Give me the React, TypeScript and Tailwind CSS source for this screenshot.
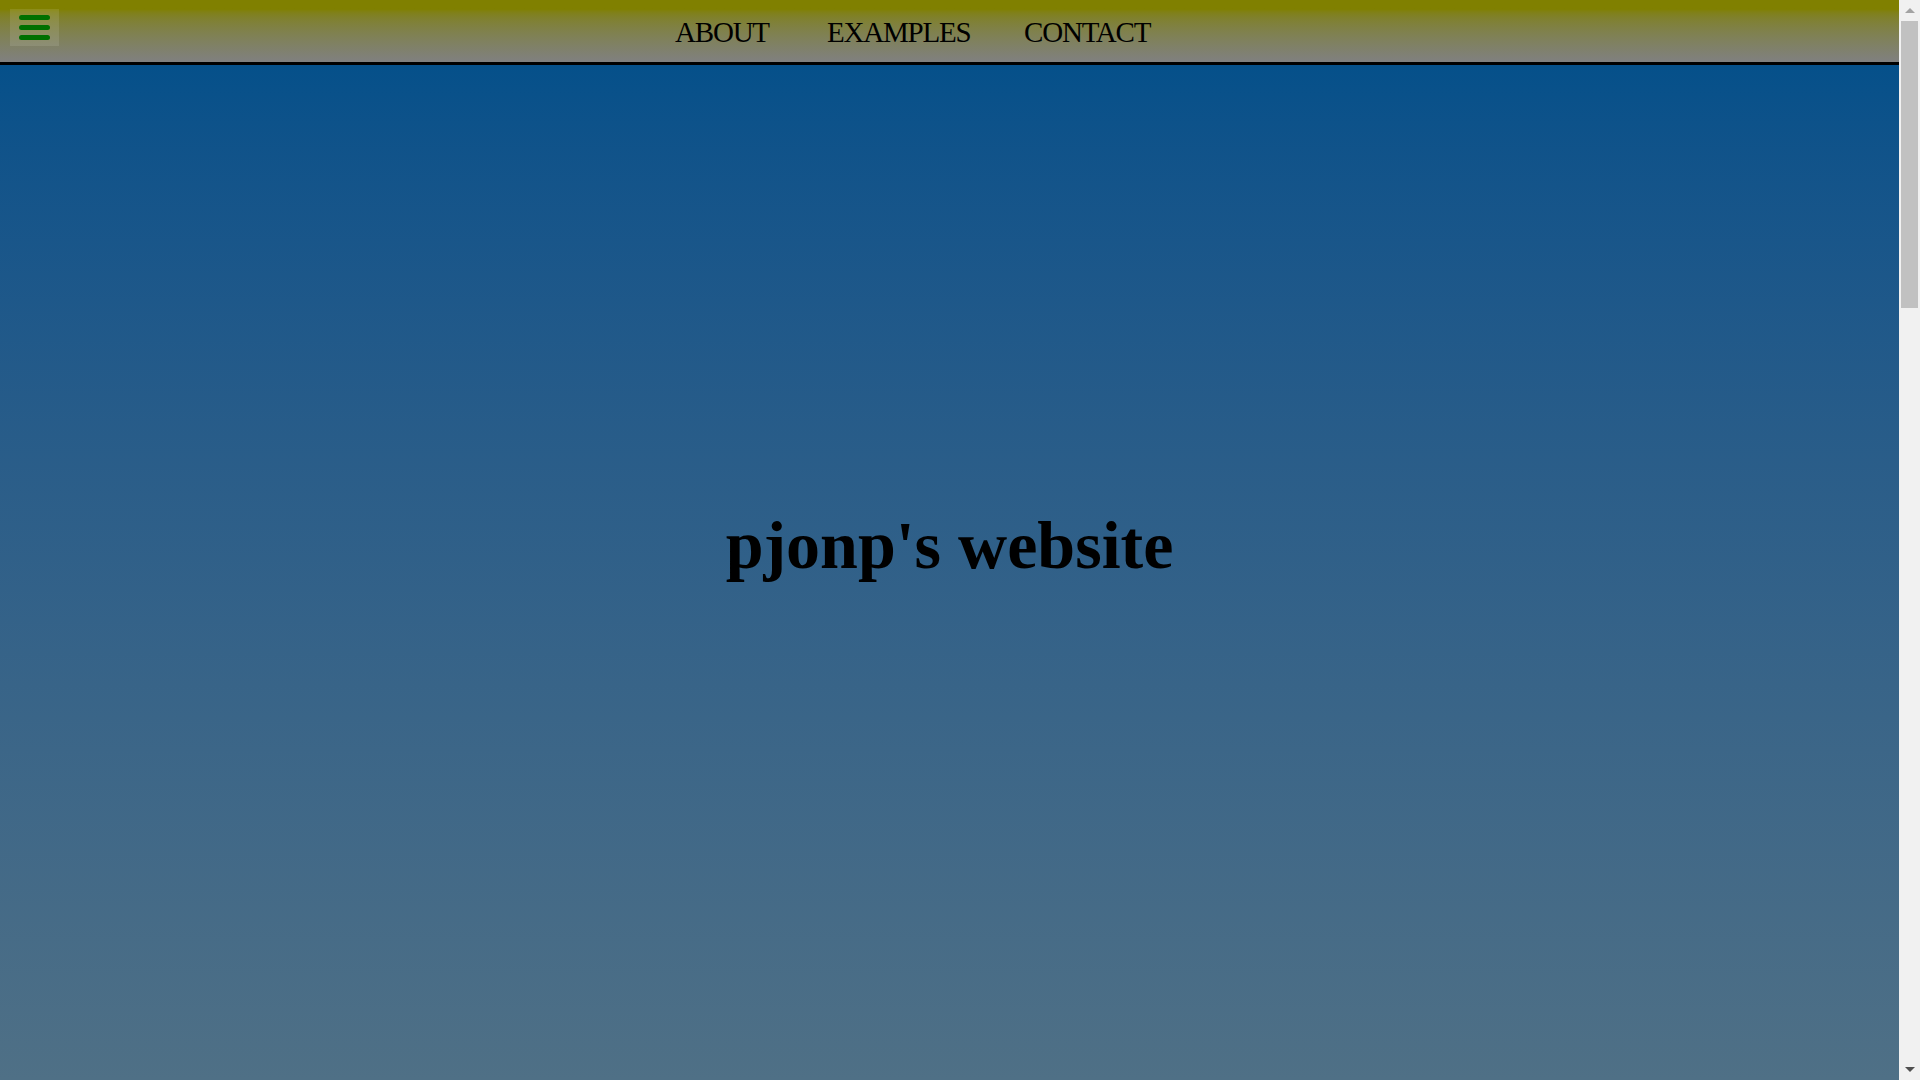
const NAV = [
  { label: "ABOUT", w: "w-[152px]" },
  { label: "EXAMPLES", w: "w-[197px]" },
  { label: "CONTACT", w: "w-[160px]" },
];

function Scrollbar() {
  return (
    <aside className="fixed right-0 top-0 h-screen w-[21px] bg-[#f1f1f1] flex flex-col">
      <div className="h-[21px] flex items-center justify-center">
        <span className="w-0 h-0 border-x-[5px] border-x-transparent border-b-[5px] border-b-[#a3a3a3]" />
      </div>
      <div className="mx-[2px] h-[287px] bg-[#c1c1c1]" />
      <div className="flex-1" />
      <div className="h-[21px] flex items-center justify-center">
        <span className="w-0 h-0 border-x-[5px] border-x-transparent border-t-[5px] border-t-[#505050]" />
      </div>
    </aside>
  );
}

export default function App() {
  return (
    <div className="font-['Liberation_Serif',serif]">
      <div className="w-[1899px]">
        {/* Top bar */}
        <header className="flex items-start h-[65px] border-b-[3px] border-black bg-gradient-to-b from-[#808000] from-15% to-[#808080]">
          <button
            aria-label="menu"
            className="ml-[10px] mt-[9px] w-[49px] h-[37px] flex flex-col items-center justify-center gap-[5px] bg-white/10"
          >
            <span className="block w-[31px] h-[5px] rounded-full bg-[#007000]" />
            <span className="block w-[31px] h-[5px] rounded-full bg-[#007000]" />
            <span className="block w-[31px] h-[5px] rounded-full bg-[#007000]" />
          </button>
          <nav className="ml-[616px] flex pt-[18px]">
            {NAV.map((item) => (
              <a
                key={item.label}
                href="#"
                className={`${item.w} text-[29px] leading-[29px] tracking-[-1.2px] text-black`}
              >
                {item.label}
              </a>
            ))}
          </nav>
        </header>

        {/* Hero */}
        <main className="h-[1015px] bg-gradient-to-b from-[#05508a] to-[#4f7086] pt-[446px] flex justify-center">
          <h1 className="text-[68px] leading-none font-bold text-black">pjonp's website</h1>
        </main>

        {/* Rest of page */}
        <section className="h-[2826px] bg-[#4f7086]" />
      </div>
      <Scrollbar />
    </div>
  );
}
